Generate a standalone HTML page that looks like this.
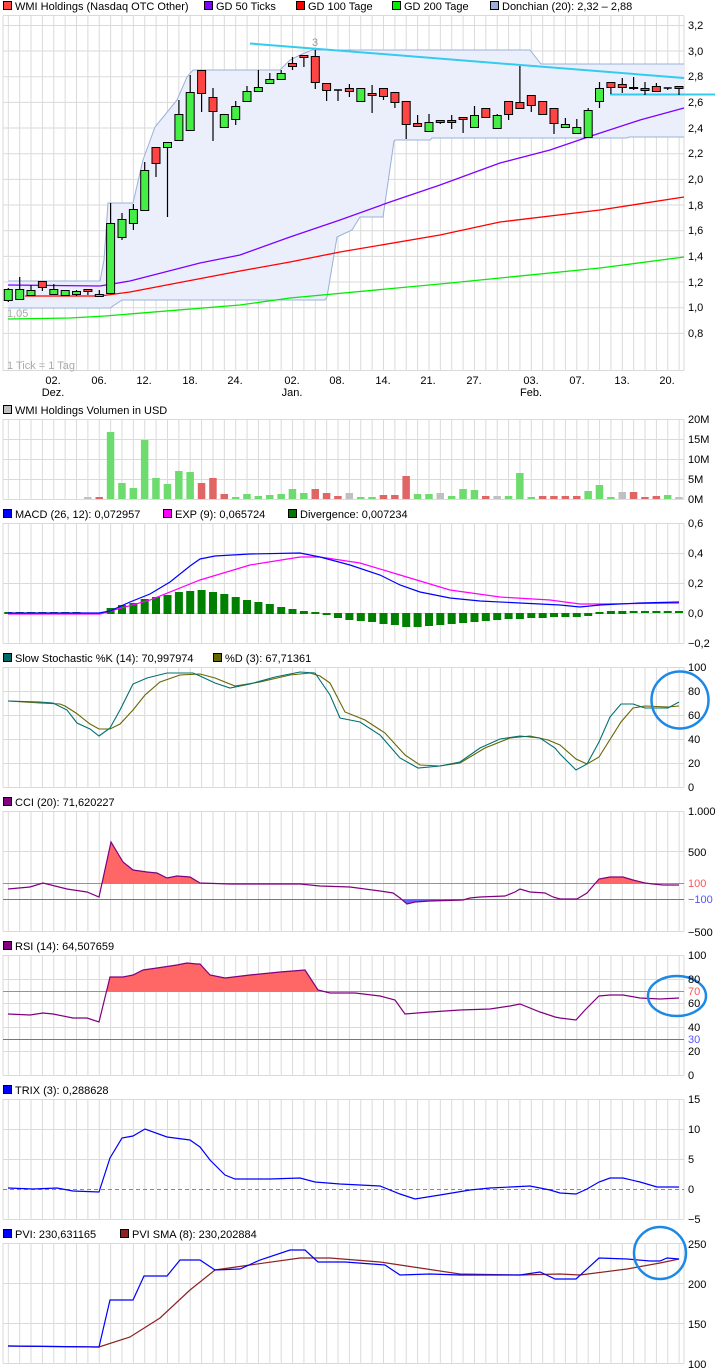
<!DOCTYPE html>
<html><head><meta charset="utf-8"><style>
html,body{margin:0;padding:0;background:#fff;}
svg{display:block;font-family:"Liberation Sans",sans-serif;font-size:11px;}
</style></head><body>
<svg width="726" height="1372" viewBox="0 0 726 1372" xmlns="http://www.w3.org/2000/svg">
<defs>
<pattern id="v" patternUnits="userSpaceOnUse" x="7.8" y="0" width="11.37" height="10"><rect x="0" y="0" width="1" height="10" fill="#dadada"/></pattern>
<clipPath id="cciUp"><rect x="0" y="800" width="726" height="83"/></clipPath>
<clipPath id="cciDn"><rect x="0" y="899" width="726" height="40"/></clipPath>
<clipPath id="rsiUp"><rect x="0" y="940" width="726" height="51"/></clipPath>
</defs>

<!-- grids -->
<g fill="url(#v)">
<rect x="3" y="16" width="681" height="355"/>
<rect x="3" y="419" width="681" height="80"/>
<rect x="3" y="523" width="681" height="120"/>
<rect x="3" y="667" width="681" height="120"/>
<rect x="3" y="811" width="681" height="120"/>
<rect x="3" y="955" width="681" height="120"/>
<rect x="3" y="1099" width="681" height="120"/>
<rect x="3" y="1243" width="681" height="120"/>
</g>
<g stroke="#dadada" stroke-width="1" fill="none">
<path d="M3 16V371M684 16V371M3 419V499M684 419V499M3 523V643M684 523V643M3 667V787M684 667V787M3 811V931M684 811V931M3 955V1075M684 955V1075M3 1099V1219M684 1099V1219M3 1243V1363M684 1243V1363"/>
<path d="M3 15.5H684M3 25.5H684M3 51H684M3 76.7H684M3 102.4H684M3 128H684M3 153.7H684M3 179.4H684M3 205H684M3 230.7H684M3 256.4H684M3 282H684M3 307.7H684M3 333.4H684M3 370.5H684"/>
<path d="M3 419.5H684M3 439.5H684M3 459.5H684M3 479.5H684M3 499.5H684"/>
<path d="M3 523.5H684M3 553.5H684M3 583.5H684M3 613.5H684M3 643.5H684"/>
<path d="M3 667.5H684M3 691.5H684M3 715.5H684M3 739.5H684M3 763.5H684M3 787.5H684"/>
<path d="M3 811.5H684M3 851.5H684M3 931.5H684"/>
<path d="M3 955.5H684M3 979.5H684M3 1003.5H684M3 1027.5H684M3 1051.5H684M3 1075.5H684"/>
<path d="M3 1099.5H684M3 1129.5H684M3 1159.5H684M3 1219.5H684"/>
<path d="M3 1243.5H684M3 1283.5H684M3 1323.5H684M3 1363.5H684"/>
</g>

<!-- main legend -->
<g>
<rect x="3.5" y="1.5" width="8" height="8" fill="#ff4444" stroke="#000"/><text x="15" y="10">WMI Holdings (Nasdaq OTC Other)</text>
<rect x="204.5" y="1.5" width="8" height="8" fill="#7f00ff" stroke="#000"/><text x="216" y="10">GD 50 Ticks</text>
<rect x="296.5" y="1.5" width="8" height="8" fill="#ff0000" stroke="#000"/><text x="308" y="10">GD 100 Tage</text>
<rect x="392.5" y="1.5" width="8" height="8" fill="#00ee00" stroke="#000"/><text x="404" y="10">GD 200 Tage</text>
<rect x="490.5" y="1.5" width="8" height="8" fill="#9ab0d8" stroke="#000"/><text x="502" y="10">Donchian (20): 2,32 – 2,88</text>
</g>

<!-- donchian -->
<polygon fill="#ebeffc" points="8,281 100,281 104,260 108,203 133,203 143,160 155,127 177,100 187,77 193,70 280,70 290,60 300,55 312,50 530,50 541,64 684,64 684,137 629,137 627,138 432,138 430,140 395,140 394,141 383,217 360,217 352,230 337,237 327,297 325,300 122,300 110,308 8,308"/>
<g fill="none" stroke="#9ab0d8" stroke-width="1">
<polyline points="8,281 100,281 104,260 108,203 133,203 143,160 155,127 177,100 187,77 193,70 280,70 290,60 300,55 312,50 530,50 541,64 684,64"/>
<polyline points="8,308 110,308 122,300 325,300 327,297 337,237 352,230 360,217 383,217 394,141 395,140 430,140 432,138 627,138 629,137 684,137"/>
</g>
<!-- moving averages -->
<g fill="none" stroke-width="1.3">
<polyline stroke="#00ee00" points="8,319 70,318 105,316 240,305 290,298 440,284 600,268 684,257"/>
<polyline stroke="#ff0000" points="25,296 100,296 130,292 240,271 290,262 340,252 440,235 500,222 600,210 684,197"/>
<polyline stroke="#7f00ff" points="8,285 100,286 130,281 200,263 240,255 290,237 340,220 390,202 440,185 500,163 550,150 588,137 640,120 684,108"/>
</g>
<!-- trend lines -->
<g stroke="#33ccee" stroke-width="2">
<line x1="250" y1="43.5" x2="684" y2="78"/>
<line x1="610" y1="94.5" x2="715" y2="94.5"/>
</g>
<text x="312" y="46" fill="#999">3</text>

<!-- wicks -->
<path stroke="#000" stroke-width="1.2" fill="none" d="M8.3 288V302M19.7 277V300M31 285V296M42.4 281V291M53.8 284V295M65.2 290V296M76.5 290V296M87.9 289V295M99.3 290V296M110.6 203V294M122 213V240M133.4 204V230M144.7 162V210M156 147V177M167.5 142V217M178.9 100V141M190.2 75V130M201.6 70V112M213 88V141M224.3 114V128M235.7 101V125M247 86V101M258.4 70V91M269.8 73V83M281.2 70V79M292.5 57V70M303.9 55V67M315.3 50V89M326.6 83V101M338 90V101M349.4 84V97M360.8 88V101M372.1 85V113M383.5 88V100M394.9 92V108M406.2 101V139M417.6 115V126M429 114V131M440.3 120V124M451.7 115V129M463.1 117V133M474.5 106V127M485.8 108V117M497.2 114V128M508.6 101V120M519.9 66V108M531.3 95V112M542.7 101V115M554 108V134M565.4 118V128M576.8 119V133M588.2 108V137M599.5 82V108M610.9 82V94M622.3 78V93M633.6 77V90M645 82V95M656.4 83V91M667.7 88V90M679 86V95"/>
<!-- bodies -->
<g stroke="#000" stroke-width="1">
<g fill="#44ee44">
<rect x="4.3" y="289.5" width="8" height="11"/><rect x="15.7" y="289.5" width="8" height="10"/><rect x="27" y="290.5" width="8" height="5"/><rect x="49.8" y="289.5" width="8" height="5"/><rect x="61.2" y="290.5" width="8" height="5"/><rect x="72.5" y="291.5" width="8" height="3"/><rect x="95.3" y="294.5" width="8" height="2"/>
<rect x="106.6" y="223.5" width="8" height="70"/><rect x="118" y="219.5" width="8" height="18"/><rect x="129.4" y="209.5" width="8" height="14"/><rect x="140.7" y="170.5" width="8" height="40"/><rect x="163.5" y="142.5" width="8" height="5"/><rect x="174.9" y="114.5" width="8" height="26"/><rect x="186.2" y="92.5" width="8" height="38"/>
<rect x="220.3" y="114.5" width="8" height="13"/><rect x="231.7" y="106.5" width="8" height="13"/><rect x="243" y="91.5" width="8" height="10"/><rect x="254.4" y="87.5" width="8" height="4"/><rect x="265.8" y="79.5" width="8" height="4"/><rect x="277.2" y="73.5" width="8" height="6"/>
<rect x="356.8" y="88.5" width="8" height="13"/><rect x="425" y="122.5" width="8" height="9"/><rect x="470.5" y="115.5" width="8" height="12"/><rect x="493.2" y="115.5" width="8" height="13"/>
<rect x="561.4" y="124.5" width="8" height="3"/><rect x="572.8" y="127.5" width="8" height="6"/><rect x="584.2" y="110.5" width="8" height="27"/><rect x="595.5" y="88.5" width="8" height="13"/>
</g>
<g fill="#ff4444">
<rect x="38.4" y="281.5" width="8" height="6"/><rect x="83.9" y="289.5" width="8" height="2"/>
<rect x="152" y="147.5" width="8" height="16"/><rect x="197.6" y="70.5" width="8" height="23"/><rect x="209" y="97.5" width="8" height="14"/>
<rect x="288.5" y="63.5" width="8" height="3"/><rect x="299.9" y="55.5" width="8" height="2"/><rect x="311.3" y="56.5" width="8" height="26"/><rect x="322.6" y="83.5" width="8" height="7"/><rect x="345.4" y="88.5" width="8" height="3"/>
<rect x="368.1" y="93.5" width="8" height="2"/><rect x="379.5" y="88.5" width="8" height="8"/><rect x="390.9" y="92.5" width="8" height="10"/><rect x="402.2" y="101.5" width="8" height="23"/><rect x="413.6" y="123.5" width="8" height="3"/>
<rect x="436.3" y="120.5" width="8" height="2"/><rect x="447.7" y="120.5" width="8" height="2"/><rect x="459.1" y="117.5" width="8" height="2"/><rect x="481.8" y="108.5" width="8" height="9"/>
<rect x="504.6" y="101.5" width="8" height="13"/><rect x="515.9" y="102.5" width="8" height="6"/><rect x="527.3" y="95.5" width="8" height="10"/><rect x="538.7" y="101.5" width="8" height="13"/><rect x="550" y="108.5" width="8" height="15"/>
<rect x="606.9" y="82.5" width="8" height="5"/><rect x="618.3" y="84.5" width="8" height="3"/><rect x="629.6" y="87.5" width="8" height="1"/><rect x="641" y="88.5" width="8" height="2"/><rect x="652.4" y="86.5" width="8" height="5"/><rect x="675" y="86.5" width="8" height="2"/>
</g>
</g>
<path stroke="#000" stroke-width="1.5" d="M334 90H342M663.7 88H671.7"/>

<!-- main axis labels -->
<g>
<text x="688" y="29">3,2</text><text x="688" y="55">3,0</text><text x="688" y="80">2,8</text><text x="688" y="106">2,6</text><text x="688" y="132">2,4</text><text x="688" y="157">2,2</text><text x="688" y="183">2,0</text><text x="688" y="209">1,8</text><text x="688" y="234">1,6</text><text x="688" y="260">1,4</text><text x="688" y="286">1,2</text><text x="688" y="311">1,0</text><text x="688" y="337">0,8</text>
</g>
<text x="7" y="317" fill="#aaa">1,05</text>
<text x="7" y="369" fill="#aaa">1 Tick = 1 Tag</text>
<g text-anchor="middle">
<text x="53" y="384">02.</text><text x="53" y="396">Dez.</text><text x="99" y="384">06.</text><text x="144" y="384">12.</text><text x="190" y="384">18.</text><text x="235" y="384">24.</text><text x="292" y="384">02.</text><text x="292" y="396">Jan.</text><text x="337" y="384">08.</text><text x="383" y="384">14.</text><text x="428" y="384">21.</text><text x="474" y="384">27.</text><text x="531" y="384">03.</text><text x="531" y="396">Feb.</text><text x="577" y="384">07.</text><text x="622" y="384">13.</text><text x="667" y="384">20.</text>
</g>

<!-- volume -->
<rect x="3.5" y="405.5" width="8" height="8" fill="#c0c0c0" stroke="#000"/><text x="15" y="414">WMI Holdings Volumen in USD</text>
<g>
<g fill="#6ddb6d">
<rect x="106.8" y="432" width="7.5" height="67"/><rect x="118.2" y="483" width="7.5" height="16"/><rect x="129.6" y="488" width="7.5" height="11"/><rect x="140.9" y="440" width="7.5" height="59"/><rect x="152.2" y="478" width="7.5" height="21"/><rect x="163.7" y="484" width="7.5" height="15"/><rect x="175.1" y="471" width="7.5" height="28"/><rect x="186.4" y="472" width="7.5" height="27"/>
<rect x="231.9" y="497" width="7.5" height="2"/><rect x="243.2" y="494" width="7.5" height="5"/><rect x="254.6" y="496" width="7.5" height="3"/><rect x="266" y="495" width="7.5" height="4"/><rect x="277.4" y="494" width="7.5" height="5"/><rect x="288.7" y="489" width="7.5" height="10"/><rect x="300.1" y="493" width="7.5" height="6"/>
<rect x="357" y="497" width="7.5" height="2"/><rect x="368.3" y="497" width="7.5" height="2"/><rect x="413.8" y="494" width="7.5" height="5"/><rect x="425.2" y="494" width="7.5" height="5"/><rect x="447.9" y="496" width="7.5" height="3"/><rect x="459.3" y="489" width="7.5" height="10"/><rect x="470.7" y="490" width="7.5" height="9"/><rect x="504.8" y="496" width="7.5" height="3"/><rect x="516.1" y="473" width="7.5" height="26"/><rect x="527.5" y="497" width="7.5" height="2"/>
<rect x="584.4" y="491" width="7.5" height="8"/><rect x="595.7" y="485" width="7.5" height="14"/><rect x="607.1" y="497" width="7.5" height="2"/><rect x="663.9" y="495" width="7.5" height="4"/>
</g>
<g fill="#e06666">
<rect x="95.5" y="497" width="7.5" height="2"/><rect x="197.8" y="483" width="7.5" height="16"/><rect x="209.2" y="478" width="7.5" height="21"/><rect x="220.5" y="494" width="7.5" height="5"/>
<rect x="311.5" y="489" width="7.5" height="10"/><rect x="322.8" y="493" width="7.5" height="6"/><rect x="334.2" y="496" width="7.5" height="3"/><rect x="379.7" y="495" width="7.5" height="4"/><rect x="391.1" y="495" width="7.5" height="4"/><rect x="402.4" y="476" width="7.5" height="23"/><rect x="482" y="496" width="7.5" height="3"/>
<rect x="538.9" y="496" width="7.5" height="3"/><rect x="550.2" y="496" width="7.5" height="3"/><rect x="561.6" y="496" width="7.5" height="3"/><rect x="573" y="496" width="7.5" height="3"/><rect x="629.8" y="492" width="7.5" height="7"/><rect x="641.2" y="497" width="7.5" height="2"/><rect x="652.6" y="496" width="7.5" height="3"/>
</g>
<g fill="#c0c0c0">
<rect x="84.1" y="497" width="7.5" height="2"/><rect x="345.6" y="493" width="7.5" height="6"/><rect x="436.5" y="493" width="7.5" height="6"/><rect x="493.4" y="496" width="7.5" height="3"/><rect x="618.5" y="492" width="7.5" height="7"/><rect x="675.2" y="497" width="7.5" height="2"/>
</g>
</g>
<g><text x="688" y="423">20M</text><text x="688" y="443">15M</text><text x="688" y="463">10M</text><text x="688" y="483">5M</text><text x="688" y="503">0M</text></g>

<!-- MACD -->
<rect x="3.5" y="509.5" width="8" height="8" fill="#0000ff" stroke="#000"/><text x="15" y="518">MACD (26, 12): 0,072957</text>
<rect x="163.5" y="509.5" width="8" height="8" fill="#ff00ff" stroke="#000"/><text x="175" y="518">EXP (9): 0,065724</text>
<rect x="288.5" y="509.5" width="8" height="8" fill="#007700" stroke="#000"/><text x="300" y="518">Divergence: 0,007234</text>
<g fill="#008000">
<rect x="4.3" y="612" width="8" height="2"/><rect x="15.7" y="612" width="8" height="2"/><rect x="27" y="612" width="8" height="2"/><rect x="38.4" y="612" width="8" height="2"/><rect x="49.8" y="612" width="8" height="2"/><rect x="61.2" y="612" width="8" height="2"/><rect x="72.5" y="612" width="8" height="2"/>
<rect x="106.6" y="608" width="8" height="6"/><rect x="118" y="605" width="8" height="9"/><rect x="129.4" y="603" width="8" height="11"/><rect x="140.7" y="599" width="8" height="15"/><rect x="152" y="597" width="8" height="17"/><rect x="163.5" y="595" width="8" height="19"/><rect x="174.9" y="592" width="8" height="22"/><rect x="186.2" y="591" width="8" height="23"/><rect x="197.6" y="590" width="8" height="24"/><rect x="209" y="592" width="8" height="22"/><rect x="220.3" y="594" width="8" height="20"/><rect x="231.7" y="597" width="8" height="17"/><rect x="243" y="600" width="8" height="14"/><rect x="254.4" y="602" width="8" height="12"/><rect x="265.8" y="604" width="8" height="10"/><rect x="277.2" y="607" width="8" height="7"/><rect x="288.5" y="609" width="8" height="5"/><rect x="299.9" y="611" width="8" height="3"/><rect x="311.3" y="612" width="8" height="2"/>
<rect x="322.6" y="613" width="8" height="2"/><rect x="334" y="613" width="8" height="5"/><rect x="345.4" y="613" width="8" height="7"/><rect x="356.8" y="613" width="8" height="8"/><rect x="368.1" y="613" width="8" height="9"/><rect x="379.5" y="613" width="8" height="11"/><rect x="390.9" y="613" width="8" height="12"/><rect x="402.2" y="613" width="8" height="14"/><rect x="413.6" y="613" width="8" height="14"/><rect x="425" y="613" width="8" height="13"/><rect x="436.3" y="613" width="8" height="12"/><rect x="447.7" y="613" width="8" height="11"/><rect x="459.1" y="613" width="8" height="10"/><rect x="470.5" y="613" width="8" height="9"/><rect x="481.8" y="613" width="8" height="8"/><rect x="493.2" y="613" width="8" height="7"/><rect x="504.6" y="613" width="8" height="6"/><rect x="515.9" y="613" width="8" height="6"/><rect x="527.3" y="613" width="8" height="5"/><rect x="538.7" y="613" width="8" height="5"/><rect x="550" y="613" width="8" height="4"/><rect x="561.4" y="613" width="8" height="4"/><rect x="572.8" y="613" width="8" height="4"/><rect x="584.2" y="613" width="8" height="3"/><rect x="595.5" y="612" width="8" height="2"/>
<rect x="606.9" y="611" width="8" height="3"/><rect x="618.3" y="611" width="8" height="3"/><rect x="629.6" y="611" width="8" height="2"/><rect x="641" y="611" width="8" height="2"/><rect x="652.4" y="611" width="8" height="2"/><rect x="663.7" y="611" width="8" height="2"/><rect x="675" y="611" width="8" height="2"/>
</g>
<g fill="none" stroke-width="1.2">
<polyline stroke="#ff00ff" points="8,614 58,614 100,614 150,600 200,580 250,565 300,557 320,557 360,563 400,575 450,590 500,597 550,600 580,604 600,604 679,603"/>
<polyline stroke="#0000ff" points="8,613 99,613 110,611 130,602 150,594 170,582 190,566 200,559 215,556 250,554 300,553 320,557 350,565 380,575 400,585 420,592 450,598 480,601 520,603 560,605 580,607 600,605 640,603 679,602"/>
</g>
<g><text x="688" y="527">0,6</text><text x="688" y="557">0,4</text><text x="688" y="587">0,2</text><text x="688" y="617">0,0</text><text x="688" y="647">−0,2</text></g>

<!-- Stochastic -->
<rect x="3.5" y="653.5" width="8" height="8" fill="#006666" stroke="#000"/><text x="15" y="662">Slow Stochastic %K (14): 70,997974</text>
<rect x="213.5" y="653.5" width="8" height="8" fill="#666600" stroke="#000"/><text x="225" y="662">%D (3): 67,71361</text>
<g fill="none" stroke-width="1.1">
<polyline stroke="#666600" points="8,701 40,703 60,704 65,706 76,713 90,724 99,729 110,729 120,724 133,710 145,695 160,682 180,675 200,674 215,678 235,686 260,682 290,675 310,673 320,676 330,683 345,712 365,720 385,733 405,755 420,765 440,766 460,763 485,748 510,738 530,736 548,740 560,745 576,759 587,764 599,757 621,722 633,708 645,706 668,707 679,706"/>
<polyline stroke="#007070" points="8,701 40,702 53,703 67,710 77,723 90,729 99,736 110,728 120,710 133,684 147,678 167,673 193,673 200,676 215,683 230,688 250,684 275,677 300,672 315,673 330,695 340,718 360,722 380,735 400,758 418,768 440,766 460,762 480,748 500,739 520,736 540,738 555,748 560,754 576,770 587,764 599,742 610,717 621,704 633,704 645,708 668,708 679,702"/>
</g>
<circle cx="680" cy="700" r="28.5" fill="none" stroke="#1e88e5" stroke-width="2.5"/>
<g><text x="688" y="671">100</text><text x="688" y="695">80</text><text x="688" y="719">60</text><text x="688" y="743">40</text><text x="688" y="767">20</text><text x="688" y="791">0</text></g>

<!-- CCI -->
<rect x="3.5" y="797.5" width="8" height="8" fill="#800080" stroke="#000"/><text x="15" y="806">CCI (20): 71,620227</text>
<g>
<polygon clip-path="url(#cciUp)" fill="#ff6666" points="8,889 30,887 43,883 67,889 87,892 99,897 111,842 123,862 133,870 147,872 157,873 167,878 177,876 190,877 200,883 230,884 300,884 320,886 350,887 380,891 393,893 400,898 407,904 415,902 430,901 463,900 470,898 480,897 505,896 515,892 520,889 530,892 545,893 553,897 560,899 577,899 587,893 599,879 610,877 623,877 633,880 645,883 653,884 663,885 679,885 679,883 8,883"/>
<polygon clip-path="url(#cciDn)" fill="#6666ff" points="380,891 393,893 400,898 407,904 415,902 430,901 463,900 470,898 480,897 480,899 380,899"/>
<line x1="3" y1="883.5" x2="684" y2="883.5" stroke="#ff6666"/>
<line x1="3" y1="899.5" x2="684" y2="899.5" stroke="#6666ff"/>
<polyline fill="none" stroke="#800080" stroke-width="1.2" points="8,889 30,887 43,883 67,889 87,892 99,897 111,842 123,862 133,870 147,872 157,873 167,878 177,876 190,877 200,883 230,884 300,884 320,886 350,887 380,891 393,893 400,898 407,904 415,902 430,901 463,900 470,898 480,897 505,896 515,892 520,889 530,892 545,893 553,897 560,899 577,899 587,893 599,879 610,877 623,877 633,880 645,883 653,884 663,885 679,885"/>
</g>
<g><text x="688" y="815">1.000</text><text x="688" y="856">500</text><text x="688" y="887" fill="#ff5555">100</text><text x="688" y="903" fill="#5555ff">−100</text><text x="688" y="936">−500</text></g>

<!-- RSI -->
<rect x="3.5" y="941.5" width="8" height="8" fill="#800080" stroke="#000"/><text x="15" y="950">RSI (14): 64,507659</text>
<polygon clip-path="url(#rsiUp)" fill="#ff6666" points="99,1022 110,977 123,977 133,975 143,970 157,968 177,965 187,963 197,964 200,964 210,975 225,978 250,975 280,972 305,970 318,990 330,993 330,1075 99,1075"/>
<line x1="3" y1="991.5" x2="684" y2="991.5" stroke="#ff6666"/>
<line x1="3" y1="1039.5" x2="684" y2="1039.5" stroke="#6666ff"/>
<polyline fill="none" stroke="#800080" stroke-width="1.2" points="8,1014 30,1015 43,1013 53,1014 73,1018 87,1018 99,1022 110,977 123,977 133,975 143,970 157,968 177,965 187,963 197,964 200,964 210,975 225,978 250,975 280,972 305,970 318,990 330,993 355,993 380,996 395,1000 405,1014 430,1012 460,1010 490,1009 510,1006 520,1004 540,1012 555,1017 560,1018 576,1020 585,1010 599,996 610,995 623,995 640,998 660,999 679,998"/>
<ellipse cx="677" cy="996" rx="29" ry="20" fill="none" stroke="#1e88e5" stroke-width="2.5"/>
<g><text x="688" y="959">100</text><text x="688" y="983">80</text><text x="688" y="995" fill="#ff5555">70</text><text x="688" y="1007">60</text><text x="688" y="1031">40</text><text x="688" y="1043" fill="#5555ff">30</text><text x="688" y="1055">20</text><text x="688" y="1079">0</text></g>

<!-- TRIX -->
<rect x="3.5" y="1085.5" width="8" height="8" fill="#0000ff" stroke="#000"/><text x="15" y="1094">TRIX (3): 0,288628</text>
<line x1="3" y1="1189.5" x2="684" y2="1189.5" stroke="#888" stroke-dasharray="4,3"/>
<polyline fill="none" stroke="#0000ff" stroke-width="1.2" points="8,1188 33,1189 57,1188 73,1191 99,1192 110,1158 122,1138 133,1136 145,1129 167,1137 190,1140 200,1147 210,1160 225,1175 235,1179 270,1179 300,1178 315,1182 340,1184 380,1186 400,1194 415,1199 440,1195 470,1190 490,1188 510,1187 530,1186 550,1190 560,1193 576,1194 587,1189 599,1182 610,1178 623,1178 640,1182 657,1187 679,1187"/>
<g><text x="688" y="1103">15</text><text x="688" y="1133">10</text><text x="688" y="1163">5</text><text x="688" y="1193">0</text><text x="688" y="1223">−5</text></g>

<!-- PVI -->
<rect x="3.5" y="1229.5" width="8" height="8" fill="#0000ff" stroke="#000"/><text x="15" y="1238">PVI: 230,631165</text>
<rect x="120.5" y="1229.5" width="8" height="8" fill="#8b2323" stroke="#000"/><text x="132" y="1238">PVI SMA (8): 230,202884</text>
<g fill="none" stroke-width="1.2">
<polyline stroke="#8b2323" points="8,1346 99,1347 130,1337 160,1318 190,1290 215,1270 250,1265 300,1258 330,1258 380,1262 420,1268 460,1274 520,1275 560,1274 580,1275 627,1269 660,1263 679,1259"/>
<polyline stroke="#0000ff" points="8,1346 99,1347 110,1300 133,1300 144,1276 167,1276 180,1260 200,1260 215,1270 240,1269 260,1260 290,1250 305,1250 318,1262 345,1262 385,1265 400,1275 430,1274 460,1275 520,1275 540,1272 555,1279 576,1279 599,1258 627,1259 650,1261 660,1261 667,1258 679,1259"/>
</g>
<circle cx="660" cy="1253" r="26" fill="none" stroke="#1e88e5" stroke-width="2.5"/>
<g><text x="688" y="1248">250</text><text x="688" y="1288">200</text><text x="688" y="1328">150</text><text x="688" y="1368">100</text></g>
</svg>
</body></html>
